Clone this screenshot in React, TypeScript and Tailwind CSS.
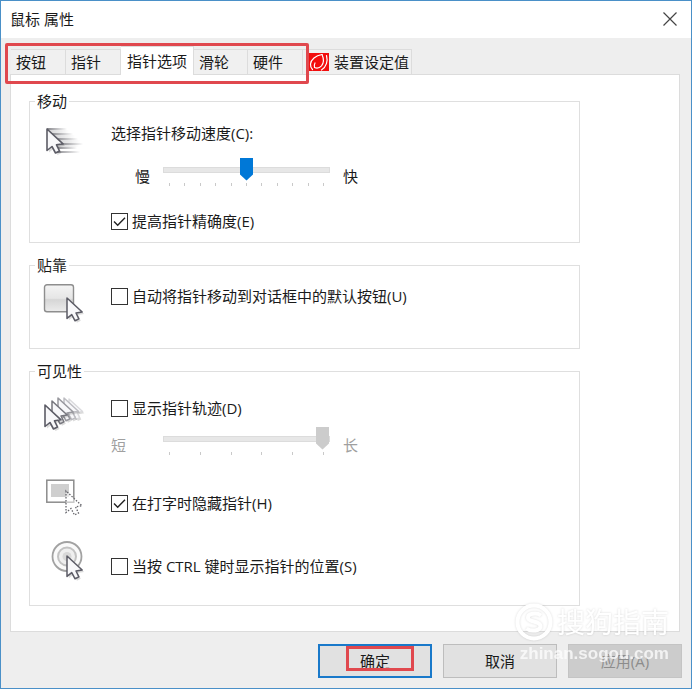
import { useState, type ReactNode } from 'react';
import clsx from 'clsx';

const tabs = [
    { id: 'buttons', label: '按钮', width: 'w-[55px]' },
    { id: 'pointers', label: '指针', width: 'w-[55px]' },
    { id: 'options', label: '指针选项', width: 'w-[73px]' },
    { id: 'wheel', label: '滑轮', width: 'w-[54px]' },
    { id: 'hardware', label: '硬件', width: 'w-[55px]' },
];

/* ---------- drawings ---------- */

const ARROW = 'M0 0V21.5L5 17.5L8.5 24L12.5 22L9.5 15.8L16 14.8Z';

function Arrow({ x, y, stroke = '#5c5c66', scale = 1 }: { x: number; y: number; stroke?: string; scale?: number }) {
    return (
        <g transform={`translate(${x} ${y}) scale(${scale})`}>
            <path d={ARROW} transform="translate(2 2)" fill="#000" opacity="0.14" />
            <path d={ARROW} fill="#f8f8fa" stroke={stroke} strokeWidth="1.6" strokeLinejoin="round" />
        </g>
    );
}

function SpeedIcon() {
    return (
        <svg width="50" height="36" viewBox="0 0 50 36" aria-hidden="true">
            <defs>
                <linearGradient id="streak" x1="0" x2="1">
                    <stop offset="0" stopColor="#85858a" />
                    <stop offset="1" stopColor="#85858a" stopOpacity="0" />
                </linearGradient>
            </defs>
            <g fill="url(#streak)">
                <rect x="12" y="4" width="20" height="2" />
                <rect x="16" y="9" width="22" height="2" />
                <rect x="20" y="14" width="23" height="2" />
                <rect x="25" y="19" width="23" height="2" />
                <rect x="22" y="23" width="20" height="2" />
                <rect x="20" y="27" width="25" height="2" />
            </g>
            <g fill="url(#streak)" opacity="0.4">
                <rect x="12" y="6" width="22" height="3" />
                <rect x="16" y="11" width="24" height="3" />
                <rect x="20" y="16" width="25" height="3" />
                <rect x="22" y="21" width="22" height="2" />
            </g>
            <Arrow x={12} y={5} />
        </svg>
    );
}

function SnapIcon() {
    return (
        <svg width="52" height="40" viewBox="0 0 52 40" aria-hidden="true">
            <defs>
                <linearGradient id="face" x1="0" x2="0" y1="0" y2="1">
                    <stop offset="0" stopColor="#f4f4f4" />
                    <stop offset="0.5" stopColor="#e6e6e6" />
                    <stop offset="0.55" stopColor="#d6d6d6" />
                    <stop offset="1" stopColor="#ececec" />
                </linearGradient>
            </defs>
            <rect x="9.5" y="0.8" width="29" height="27" rx="2.5" fill="url(#face)" stroke="#8e8e8e" strokeWidth="1.4" />
            <Arrow x={32} y={14} scale={0.95} />
        </svg>
    );
}

function TrailsIcon() {
    return (
        <svg width="52" height="40" viewBox="0 0 52 40" aria-hidden="true">
            <Arrow x={34} y={3} stroke="#dadadd" scale={0.85} />
            <Arrow x={29} y={2} stroke="#bdbdc2" scale={0.9} />
            <Arrow x={23} y={2} stroke="#98989e" scale={0.95} />
            <Arrow x={17} y={5} stroke="#77777e" scale={0.95} />
            <Arrow x={10} y={9} />
        </svg>
    );
}

function HideIcon() {
    return (
        <svg width="52" height="40" viewBox="0 0 52 40" aria-hidden="true">
            <rect x="11.8" y="2.2" width="27" height="22" fill="#fff" stroke="#8c8c8c" strokeWidth="1.5" />
            <rect x="16" y="6" width="18" height="13" fill="#cfcfcf" />
            <path
                d={ARROW}
                transform="translate(31 13)"
                fill="#fff"
                fillOpacity="0.5"
                stroke="#66666c"
                strokeWidth="1.3"
                strokeDasharray="1.5 1.5"
            />
        </svg>
    );
}

function LocateIcon() {
    return (
        <svg width="52" height="42" viewBox="0 0 52 42" aria-hidden="true">
            <circle cx="32" cy="16.5" r="14.5" fill="#fafafa" stroke="#a2a2a2" strokeWidth="1.8" />
            <circle cx="32" cy="16.5" r="9" fill="#efefef" stroke="#c2c2c2" strokeWidth="2" />
            <circle cx="32" cy="16.5" r="4.5" fill="#d8d8d8" />
            <Arrow x={32} y={16} scale={0.95} />
        </svg>
    );
}

function DeviceIcon() {
    return (
        <svg width="20" height="18" viewBox="0 0 20 18" aria-hidden="true">
            <rect width="20" height="18" fill="#f20d0d" />
            <g fill="none" stroke="#fff" strokeWidth="1.2" strokeLinecap="round">
                <path d="M13 1.5C6.500 2.500 2 6.500 1.500 11C1.300 13.500 2 15 3.500 16.500" />
                <path d="M13 1.5C15 6 14.800 10 12.500 12.800C10.500 15 8 15.500 5.500 14.500C5 13 5.200 11.500 6 10" />
                <path d="M17.500 2.500C19 8 17.500 14 12.500 17" />
            </g>
        </svg>
    );
}

/* ---------- controls ---------- */

interface CheckProps {
    children: ReactNode;
    defaultChecked?: boolean;
    onChange?: (checked: boolean) => void;
}

function Check({ children, defaultChecked, onChange }: CheckProps) {
    return (
        <label className="flex h-5 items-center gap-1">
            <span className="grid shrink-0">
                <input
                    type="checkbox"
                    defaultChecked={defaultChecked}
                    onChange={(e) => onChange?.(e.target.checked)}
                    className="peer col-start-1 row-start-1 size-[17px] appearance-none border border-[#333] bg-white"
                />
                <svg
                    viewBox="0 0 17 17"
                    className="pointer-events-none invisible col-start-1 row-start-1 size-[17px] peer-checked:visible"
                    aria-hidden="true"
                >
                    <path d="M3 8.500L6.700 12.200L14 4.800" fill="none" stroke="#222" strokeWidth="1.400" />
                </svg>
            </span>
            <span>{children}</span>
        </label>
    );
}

interface SliderProps {
    label: string;
    low: ReactNode;
    high: string;
    max: number;
    defaultValue: number;
    disabled?: boolean;
}

function Slider({ label, low, high, max, defaultValue, disabled }: SliderProps) {
    return (
        <div className={clsx('flex h-[29px] items-start', disabled && 'text-[#a0a0a0]')}>
            <span className="mt-2 w-[52px] shrink-0">{low}</span>
            <div className="w-[167px]">
                <input
                    type="range"
                    aria-label={label}
                    min={0}
                    max={max}
                    defaultValue={defaultValue}
                    disabled={disabled}
                    className="block h-[23px] w-full appearance-none bg-transparent [&::-webkit-slider-runnable-track]:h-[6px] [&::-webkit-slider-runnable-track]:border [&::-webkit-slider-runnable-track]:border-[#dcdcdc] [&::-webkit-slider-runnable-track]:bg-[#e7e7e7] [&::-webkit-slider-thumb]:mt-[-10px] [&::-webkit-slider-thumb]:h-[23px] [&::-webkit-slider-thumb]:w-[13px] [&::-webkit-slider-thumb]:appearance-none [&::-webkit-slider-thumb]:bg-[#0078d7] [&::-webkit-slider-thumb]:[clip-path:polygon(0_0,100%_0,100%_74%,50%_100%,0_74%)] disabled:[&::-webkit-slider-thumb]:bg-[#cccccc]"
                />
                <div className="mt-0.5 flex justify-between px-[6px]" aria-hidden="true">
                    {Array.from({ length: max + 1 }, (_, i) => (
                        <span key={i} className="h-[3px] w-px bg-[#c9c9c9]" />
                    ))}
                </div>
            </div>
            <span className="mt-2 ml-[13px]">{high}</span>
        </div>
    );
}

function Group({ title, className, children }: { title: string; className?: string; children: ReactNode }) {
    return (
        <fieldset className={clsx('w-full max-w-[551px] border border-[#dfdfdf] pl-[5px]', className)}>
            <legend className="px-0.5 leading-[22px]">{title}</legend>
            {children}
        </fieldset>
    );
}

function Row({ icon, className, children }: { icon: ReactNode; className?: string; children: ReactNode }) {
    return (
        <div className="flex items-start">
            <div className="w-[76px] shrink-0">{icon}</div>
            <div className={clsx('grow', className)}>{children}</div>
        </div>
    );
}

function Watermark() {
    return (
        <div className="pointer-events-none absolute right-[22px] bottom-[22px] text-white select-none">
            <div className="flex items-center justify-end gap-1 drop-shadow-[0_0_1px_rgba(0,0,0,0.14)]">
                <svg width="38" height="40" viewBox="0 0 38 40" aria-hidden="true">
                    <circle cx="19" cy="20" r="16.500" fill="none" stroke="#fff" strokeWidth="4" />
                    <path
                        d="M26 13.500C22 10.500 12.500 11 13 16C13.500 20.500 25 18.500 25.500 24C25.800 29 16 30 11.500 26.500"
                        fill="none"
                        stroke="#fff"
                        strokeWidth="4"
                    />
                </svg>
                <span className="text-[28px] leading-10">搜狗指南</span>
            </div>
            <div className="text-right font-['Liberation_Sans',sans-serif] text-[17px] leading-6 font-bold opacity-75">
                zhinan.sogou.com
            </div>
        </div>
    );
}

export default function App() {
    const [active, setActive] = useState('options');
    const [trails, setTrails] = useState(false);

    const tabClass = (selected: boolean) =>
        clsx(
            'shrink-0 border-[#dcdcdc] pl-[5px] text-left whitespace-nowrap',
            selected ? 'relative h-[29px] border-t border-r bg-white pl-[6px]' : 'h-[25px] border-t border-r bg-[#f0f0f0]',
        );

    return (
        <div className="relative flex min-h-screen flex-col border border-[#4a90c8] bg-[#eeeeee] font-['Open_Sans','Noto_Sans_CJK_SC',sans-serif] text-[15px] leading-5 text-[#1a1a1a]">
            <header className="flex h-[37px] items-center justify-between bg-white pr-3.5 pb-px pl-[9px]">
                <h1>鼠标 属性</h1>
                <button type="button" aria-label="关闭">
                    <svg width="14" height="14" viewBox="0 0 14 14" aria-hidden="true">
                        <path d="M0.500 0.500L13.500 13.500M13.500 0.500L0.500 13.500" stroke="#444" strokeWidth="1.200" />
                    </svg>
                </button>
            </header>

            <main className="flex grow flex-col pt-2 pr-[11px] pl-[9px]">
                <div role="tablist" className="relative z-10 -mb-px flex items-end pl-px">
                    <div className="relative flex items-end pb-px">
                        {tabs.map((tab) => (
                            <button
                                key={tab.id}
                                type="button"
                                role="tab"
                                aria-selected={tab.id === active}
                                onClick={() => setActive(tab.id)}
                                className={clsx(tab.width, tabClass(tab.id === active), tab.id === active && '-mb-px')}
                            >
                                {tab.label}
                            </button>
                        ))}
                        <div className="pointer-events-none absolute -inset-x-1.5 -top-[3px] -bottom-[9px] rounded-[2px] border-[3px] border-[#e0484e]" />
                    </div>
                    <button
                        type="button"
                        role="tab"
                        aria-selected={active === 'device'}
                        onClick={() => setActive('device')}
                        className="mb-px flex h-[25px] items-center gap-[5px] border-t border-r border-[#dcdcdc] bg-[#f0f0f0] pr-0.5 pl-1.5"
                    >
                        <DeviceIcon />
                        装置设定值
                    </button>
                </div>

                <section role="tabpanel" className="flex flex-col gap-[11px] border border-[#dcdcdc] bg-white pt-[15px] pr-3 pb-[25px] pl-[18px]">
                    <Group title="移动" className="pb-[11px]">
                        <Row icon={<div className="pt-3"><SpeedIcon /></div>} className="pt-[11px]">
                            <p>选择指针移动速度(C):</p>
                            <div className="mt-[15px]">
                                <Slider
                                    label="指针移动速度"
                                    low={<span className="pl-6">慢</span>}
                                    high="快"
                                    max={10}
                                    defaultValue={5}
                                />
                            </div>
                            <div className="mt-6">
                                <Check defaultChecked>提高指针精确度(E)</Check>
                            </div>
                        </Row>
                    </Group>

                    <Group title="贴靠" className="pb-6">
                        <div className="pt-2">
                            <Row icon={<SnapIcon />} className="pt-0.5">
                                <Check>自动将指针移动到对话框中的默认按钮(U)</Check>
                            </Row>
                        </div>
                    </Group>

                    <Group title="可见性" className="pb-[23px]">
                        <div className="flex flex-col gap-[22px] pt-3.5">
                            <Row icon={<TrailsIcon />} className="pt-0.5">
                                <Check onChange={setTrails}>显示指针轨迹(D)</Check>
                                <div className="mt-[9px]">
                                    <Slider label="指针轨迹长度" low="短" high="长" max={5} defaultValue={5} disabled={!trails} />
                                </div>
                            </Row>
                            <Row icon={<HideIcon />} className="pt-[15px]">
                                <Check defaultChecked>在打字时隐藏指针(H)</Check>
                            </Row>
                            <Row icon={<LocateIcon />} className="pt-4">
                                <Check>当按 CTRL 键时显示指针的位置(S)</Check>
                            </Row>
                        </div>
                    </Group>
                </section>
            </main>

            <footer className="flex justify-end gap-[11px] pt-3 pr-[9px] pb-[10px]">
                <button type="button" className="relative h-[34px] w-[114px] border-2 border-[#1979ca] bg-[#e1e1e1]">
                    确定
                    <span className="pointer-events-none absolute top-0 right-4 bottom-[5px] left-[26px] border-[3px] border-[#e0484e]" />
                </button>
                <button type="button" className="h-[34px] w-[114px] border border-[#bdbdbd] bg-[#e1e1e1]">
                    取消
                </button>
                <button type="button" disabled className="h-[34px] w-[114px] border border-[#c4c4c4] bg-[#cccccc] text-[#8c8c8c]">
                    应用(A)
                </button>
            </footer>

            <Watermark />
        </div>
    );
}
